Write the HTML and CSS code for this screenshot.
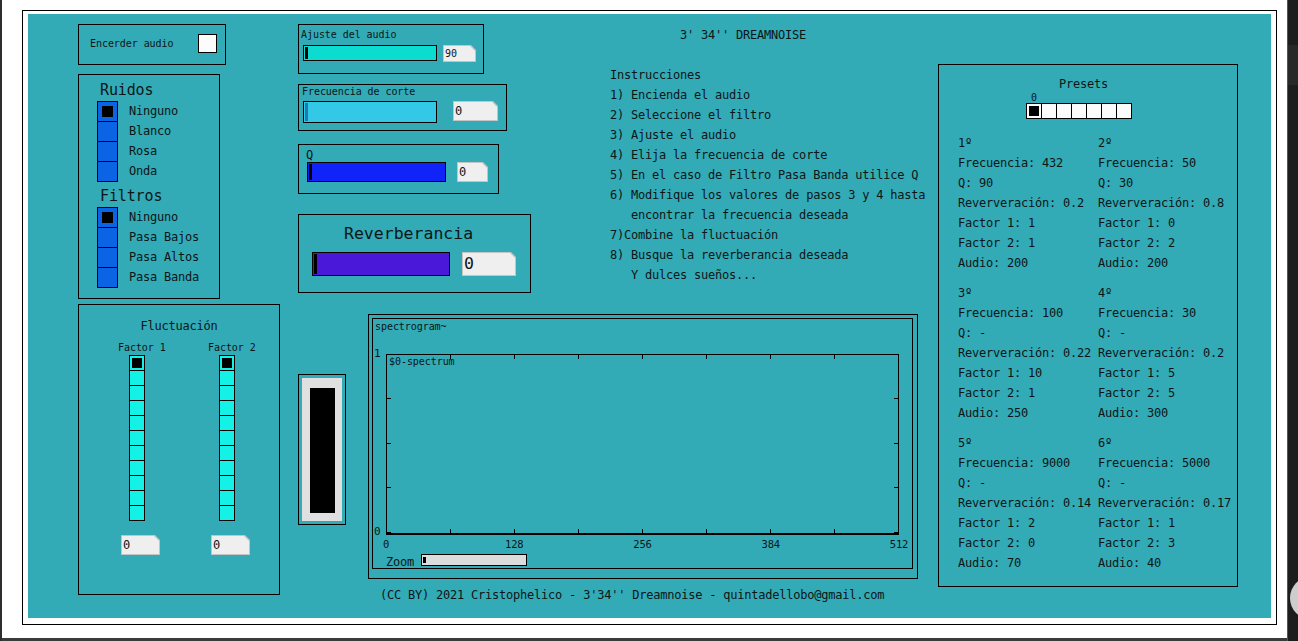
FILE: index.html
```html
<!DOCTYPE html>
<html lang="es">
<head>
<meta charset="utf-8">
<title>3' 34'' DREAMNOISE</title>
<link rel="stylesheet" href="styles.css">
</head>
<body>
<div class="screen">
  <div class="edge-left"></div>
  <div class="main">
    <div class="window">
      <div class="frame">
        <div class="canvas">

          <div class="box enc">
            <span class="lbl10">Encerder audio</span>
            <span class="toggle"></span>
          </div>

          <div class="box noise">
            <div class="head">Ruidos</div>
            <div class="group">
              <div class="radio v big">
                <span class="cell on"><i></i></span>
                <span class="cell"></span>
                <span class="cell"></span>
                <span class="cell"></span>
              </div>
              <div class="labels">
                <div>Ninguno</div>
                <div>Blanco</div>
                <div>Rosa</div>
                <div>Onda</div>
              </div>
            </div>
            <div class="head second">Filtros</div>
            <div class="group">
              <div class="radio v big">
                <span class="cell on"><i></i></span>
                <span class="cell"></span>
                <span class="cell"></span>
                <span class="cell"></span>
              </div>
              <div class="labels">
                <div>Ninguno</div>
                <div>Pasa Bajos</div>
                <div>Pasa Altos</div>
                <div>Pasa Banda</div>
              </div>
            </div>
          </div>

          <div class="box fluct">
            <div class="f-title">Fluctuación</div>
            <div class="f-cols">
              <div class="f-col">
                <div class="lbl10 f-lbl">Factor 1</div>
                <div class="radio v small">
                  <span class="cell on"><i></i></span>
                  <span class="cell"></span><span class="cell"></span><span class="cell"></span><span class="cell"></span><span class="cell"></span><span class="cell"></span><span class="cell"></span><span class="cell"></span><span class="cell"></span><span class="cell"></span>
                </div>
                <div class="num n-factor"><span>0</span></div>
              </div>
              <div class="f-col">
                <div class="lbl10 f-lbl">Factor 2</div>
                <div class="radio v small">
                  <span class="cell on"><i></i></span>
                  <span class="cell"></span><span class="cell"></span><span class="cell"></span><span class="cell"></span><span class="cell"></span><span class="cell"></span><span class="cell"></span><span class="cell"></span><span class="cell"></span><span class="cell"></span>
                </div>
                <div class="num n-factor"><span>0</span></div>
              </div>
            </div>
          </div>

          <div class="box gain">
            <div class="lbl10 gain-lbl">Ajuste del audio</div>
            <div class="srow">
              <div class="slider s-gain"><span class="knob"></span></div>
              <div class="num n-gain"><span>90</span></div>
            </div>
          </div>

          <div class="box freq">
            <div class="lbl10 freq-lbl">Frecuencia de corte</div>
            <div class="srow">
              <div class="slider s-freq"><span class="knob"></span></div>
              <div class="num n-freq"><span>0</span></div>
            </div>
          </div>

          <div class="box qbox">
            <div class="q-lbl">Q</div>
            <div class="srow">
              <div class="slider s-q"><span class="knob"></span></div>
              <div class="num n-q"><span>0</span></div>
            </div>
          </div>

          <div class="box rev">
            <div class="rev-lbl">Reverberancia</div>
            <div class="srow">
              <div class="slider s-rev"><span class="knob"></span></div>
              <div class="num n-rev"><span>0</span></div>
            </div>
          </div>

          <div class="box vu">
            <div class="vu-bg"><div class="vu-bar"></div></div>
          </div>

          <div class="box spec">
            <div class="spec-inner">
              <div class="lbl10 spec-lbl">spectrogram~</div>
              <div class="plot">
                <svg class="plot-svg" width="513" height="181" viewBox="0 0 513 181">
                  <g fill="#000">
                    <rect x="0" y="0" width="513" height="1"/>
                    <rect x="0" y="179" width="513" height="2"/>
                    <rect x="0" y="0" width="1" height="181"/>
                    <rect x="512" y="0" width="1" height="181"/>
                    <rect x="64" y="0" width="1" height="5"/>
                    <rect x="128" y="0" width="1" height="5"/>
                    <rect x="192" y="0" width="1" height="5"/>
                    <rect x="256" y="0" width="1" height="5"/>
                    <rect x="320" y="0" width="1" height="5"/>
                    <rect x="384" y="0" width="1" height="5"/>
                    <rect x="448" y="0" width="1" height="5"/>
                    <rect x="64" y="175" width="1" height="5"/>
                    <rect x="128" y="175" width="1" height="5"/>
                    <rect x="192" y="175" width="1" height="5"/>
                    <rect x="256" y="175" width="1" height="5"/>
                    <rect x="320" y="175" width="1" height="5"/>
                    <rect x="384" y="175" width="1" height="5"/>
                    <rect x="448" y="175" width="1" height="5"/>
                    <rect x="0" y="44" width="5" height="1"/>
                    <rect x="0" y="89" width="5" height="1"/>
                    <rect x="0" y="133" width="5" height="1"/>
                    <rect x="508" y="44" width="5" height="1"/>
                    <rect x="508" y="89" width="5" height="1"/>
                    <rect x="508" y="133" width="5" height="1"/>
                    <rect x="1" y="178" width="4" height="1"/>
                    <rect x="508" y="178" width="4" height="1"/>
                  </g>
                </svg>
                <span class="lbl10 plot-name">$0-spectrum</span>
                <span class="ylab ytop">1</span>
                <span class="ylab ybot">0</span>
              </div>
              <div class="xlabels">
                <span>0</span><span>128</span><span>256</span><span>384</span><span>512</span>
              </div>
              <div class="zoomrow">
                <span class="zoom-lbl">Zoom</span>
                <div class="zslider"><span class="zknob"></span></div>
              </div>
            </div>
          </div>

          <div class="title">3' 34'' DREAMNOISE</div>

          <div class="instr">Instrucciones
1) Encienda el audio
2) Seleccione el filtro
3) Ajuste el audio
4) Elija la frecuencia de corte
5) En el caso de Filtro Pasa Banda utilice Q
6) Modifique los valores de pasos 3 y 4 hasta
   encontrar la frecuencia deseada
7)Combine la fluctuación
8) Busque la reverberancia deseada
   Y dulces sueños...</div>

          <div class="box presets">
            <div class="p-title">Presets</div>
            <div class="lbl10 p-idx">0</div>
            <div class="radio h">
              <span class="cell on"><i></i></span>
              <span class="cell"></span><span class="cell"></span><span class="cell"></span><span class="cell"></span><span class="cell"></span><span class="cell"></span>
            </div>
            <div class="p-grid">
              <div>1º<br>Frecuencia: 432<br>Q: 90<br>Reververación: 0.2<br>Factor 1: 1<br>Factor 2: 1<br>Audio: 200</div>
              <div>2º<br>Frecuencia: 50<br>Q: 30<br>Reververación: 0.8<br>Factor 1: 0<br>Factor 2: 2<br>Audio: 200</div>
              <div>3º<br>Frecuencia: 100<br>Q: -<br>Reververación: 0.22<br>Factor 1: 10<br>Factor 2: 1<br>Audio: 250</div>
              <div>4º<br>Frecuencia: 30<br>Q: -<br>Reververación: 0.2<br>Factor 1: 5<br>Factor 2: 5<br>Audio: 300</div>
              <div>5º<br>Frecuencia: 9000<br>Q: -<br>Reververación: 0.14<br>Factor 1: 2<br>Factor 2: 0<br>Audio: 70</div>
              <div>6º<br>Frecuencia: 5000<br>Q: -<br>Reververación: 0.17<br>Factor 1: 1<br>Factor 2: 3<br>Audio: 40</div>
            </div>
          </div>

          <div class="footer">(CC BY) 2021 Cristophelico - 3'34'' Dreamnoise - quintadellobo@gmail.com</div>

        </div>
      </div>
    </div>
    <div class="edge-bottom"></div>
  </div>
  <div class="edge-right"><div class="side-knob"></div></div>
</div>
</body>
</html>
```

FILE: styles.css
```css
* { box-sizing: border-box; }
html, body { margin: 0; padding: 0; }
body {
  font-family: "DejaVu Sans Mono", monospace;
  font-size: 12px;
  letter-spacing: -0.22px;
  color: #0d1517;
  background: #fff;
}

.screen {
  width: 1298px;
  height: 641px;
  display: flex;
  overflow: hidden;
}
.edge-left { width: 2px; background: #2d2d2d; }
.main { flex: 1; display: flex; flex-direction: column; }
.window { height: 638px; background: #fff; padding: 10px 0 0 20px; }
.edge-bottom { height: 3px; background: #3a3a3a; }
.edge-right {
  width: 11px;
  position: relative;
  overflow: hidden;
  border-left: 1px solid #555;
  background: linear-gradient(#1d1d1d 0 45px, #282828 45px 85px, #1d1d1d 85px);
}
.side-knob {
  position: absolute;
  left: 2px;
  top: 577px;
  width: 40px;
  height: 42px;
  border-radius: 50%;
  background: #cdcdcd;
}

.frame {
  width: 1255px;
  height: 615px;
  border: 1px solid #000;
  padding: 3px 5px 6px 5px;
}
.canvas {
  position: relative;
  width: 100%;
  height: 100%;
  background: #32abb6;
}

/* generic patch objects placed on the canvas */
.box { position: absolute; border: 1px solid #000; }
.lbl10 { font-size: 10px; line-height: 14px; letter-spacing: -0.06px; }

/* toggle box */
.enc { left: 50px; top: 10px; width: 148px; height: 41px;
  display: flex; align-items: center; justify-content: space-between;
  padding: 0 8px 2px 11px; }
.toggle { width: 19px; height: 19px; border: 1px solid #000; background: #fcfcfc; }

/* radios */
.radio { display: flex; }
.radio.v { flex-direction: column; }
.radio .cell { display: flex; align-items: center; justify-content: center; border: 1px solid #000; flex-shrink: 0; }
.radio.v .cell + .cell { margin-top: -1px; }
.radio.h .cell + .cell { margin-left: -1px; }
.radio .cell i { display: block; background: #000; }
.radio.big .cell { width: 21px; height: 21px; background: #0a64e4; }
.radio.big .cell i { width: 11px; height: 11px; }
.radio.small .cell { width: 16px; height: 16px; background: #14f2e8; }
.radio.small .cell i, .radio.h .cell i { width: 10px; height: 10px; }
.radio.h { margin-left: 87px; }
.radio.h .cell { width: 16px; height: 16px; background: #fcfcfc; }

/* Ruidos / Filtros */
.noise { left: 50px; top: 60px; width: 142px; height: 225px; padding-left: 18px; }
.head { font-size: 15px; letter-spacing: -0.13px; line-height: 22px; padding-top: 4px; margin-left: 3px; height: 26px; }
.head.second { padding-top: 3px; height: 25px; }
.group { display: flex; }
.labels { margin-left: 11px; line-height: 20px; }

/* Fluctuación */
.fluct { left: 50px; top: 290px; width: 202px; height: 291px; padding-top: 11px; }
.f-title { text-align: center; line-height: 20px; }
.f-cols { display: flex; margin: 5px 0 0 39px; }
.f-col { width: 90px; flex-shrink: 0; }
.f-col .radio { margin-left: 11px; }
.n-factor { width: 39px; height: 20px; margin: 14px 0 0 3px; }

/* number boxes */
.num {
  background: #c4c4c4;
  padding: 1px;
  flex-shrink: 0;
  clip-path: polygon(0 0, calc(100% - 5px) 0, 100% 5px, 100% 100%, 0 100%);
}
.num span {
  display: block;
  height: 100%;
  background: #efefef;
  padding-left: 1px;
  line-height: 18px;
  clip-path: polygon(0 0, calc(100% - 5px) 0, 100% 5px, 100% 100%, 0 100%);
}

/* sliders */
.srow { display: flex; align-items: flex-start; }
.slider { display: flex; border: 1px solid #000; padding: 1px; flex-shrink: 0; }
.slider .knob { width: 3px; background: #000; }

.gain { left: 270px; top: 10px; width: 186px; height: 50px; padding-top: 3px; }
.gain-lbl { padding-left: 2px; }
.s-gain { width: 134px; height: 16px; margin: 3px 0 0 4px; background: #0cdcd0; }
.n-gain { width: 33px; height: 17px; margin: 3px 0 0 6px; }
.n-gain span { font-size: 10px; letter-spacing: 0; line-height: 15px; }

.freq { left: 270px; top: 70px; width: 209px; height: 47px; }
.freq-lbl { padding-left: 3px; }
.s-freq { width: 134px; height: 22px; margin: 2px 0 0 4px; background: #33c9e6; }
.s-freq .knob { background: #1f78b4; }
.n-freq { width: 45px; height: 20px; margin: 2px 0 0 16px; }

.qbox { left: 270px; top: 130px; width: 201px; height: 50px; padding-top: 3px; }
.q-lbl { padding-left: 7px; line-height: 14px; }
.s-q { width: 139px; height: 20px; margin-left: 8px; background: #1024f9; }
.n-q { width: 31px; height: 20px; margin-left: 11px; }

.rev { left: 270px; top: 200px; width: 233px; height: 79px; padding-top: 7px; }
.rev-lbl { padding-left: 45px; font-size: 16.5px; letter-spacing: 0; line-height: 24px; }
.rev .srow { margin-top: 6px; }
.s-rev { width: 138px; height: 24px; margin-left: 13px; background: #4a18d8; }
.n-rev { width: 54px; height: 24px; margin-left: 12px; }
.n-rev span { font-size: 16.5px; letter-spacing: 0; line-height: 22px; }

/* vu */
.vu { left: 270px; top: 360px; width: 48px; height: 151px; padding: 3px; }
.vu-bg { height: 100%; background: #e0e0e0; padding: 10px 7px 8px 8px; display: flex; }
.vu-bar { flex: 1; background: #000; }

/* spectrogram */
.spec { left: 340px; top: 300px; width: 550px; height: 265px; padding: 3px 4px 9px 3px; }
.spec-inner { height: 100%; border: 1px solid #000; }
.spec-lbl { padding: 1px 0 0 2px; }
.plot { position: relative; width: 513px; height: 181px; margin: 20px 0 0 13px; }
.plot-svg { display: block; }
.plot-name { position: absolute; left: 3px; top: 1px; }
.ylab { position: absolute; left: -12px; font-size: 11px; line-height: 14px; }
.ytop { top: -7px; }
.ybot { top: 171px; }
.xlabels { display: flex; justify-content: space-between; width: 543px; margin: 2px 0 0 -2px;
  font-size: 10.5px; letter-spacing: -0.1px; line-height: 14px; }
.xlabels span { width: 30px; text-align: center; }
.zoomrow { display: flex; align-items: flex-start; margin: 3px 0 0 13px; }
.zoom-lbl { line-height: 14px; margin-top: 1px; }
.zslider { width: 106px; height: 12px; margin-left: 7px; border: 1px solid #000; background: #dcdcdc;
  padding: 2px 1px; display: flex; flex-shrink: 0; }
.zknob { width: 3px; height: 6px; background: #000; }

/* comments */
.title { position: absolute; left: 652px; top: 11px; line-height: 20px; }
.instr { position: absolute; left: 582px; top: 51px; line-height: 20px; white-space: pre; }
.footer { position: absolute; left: 352px; top: 571px; line-height: 20px; white-space: pre; }

/* presets */
.presets { left: 910px; top: 50px; width: 300px; height: 523px; padding-top: 10px; }
.p-title { padding-left: 120px; line-height: 18px; }
.p-idx { padding-left: 92px; line-height: 10px; }
.p-grid { display: grid; grid-template-columns: 140px 140px; row-gap: 10px;
  margin: 14px 0 0 19px; line-height: 20px; white-space: nowrap; }
```
